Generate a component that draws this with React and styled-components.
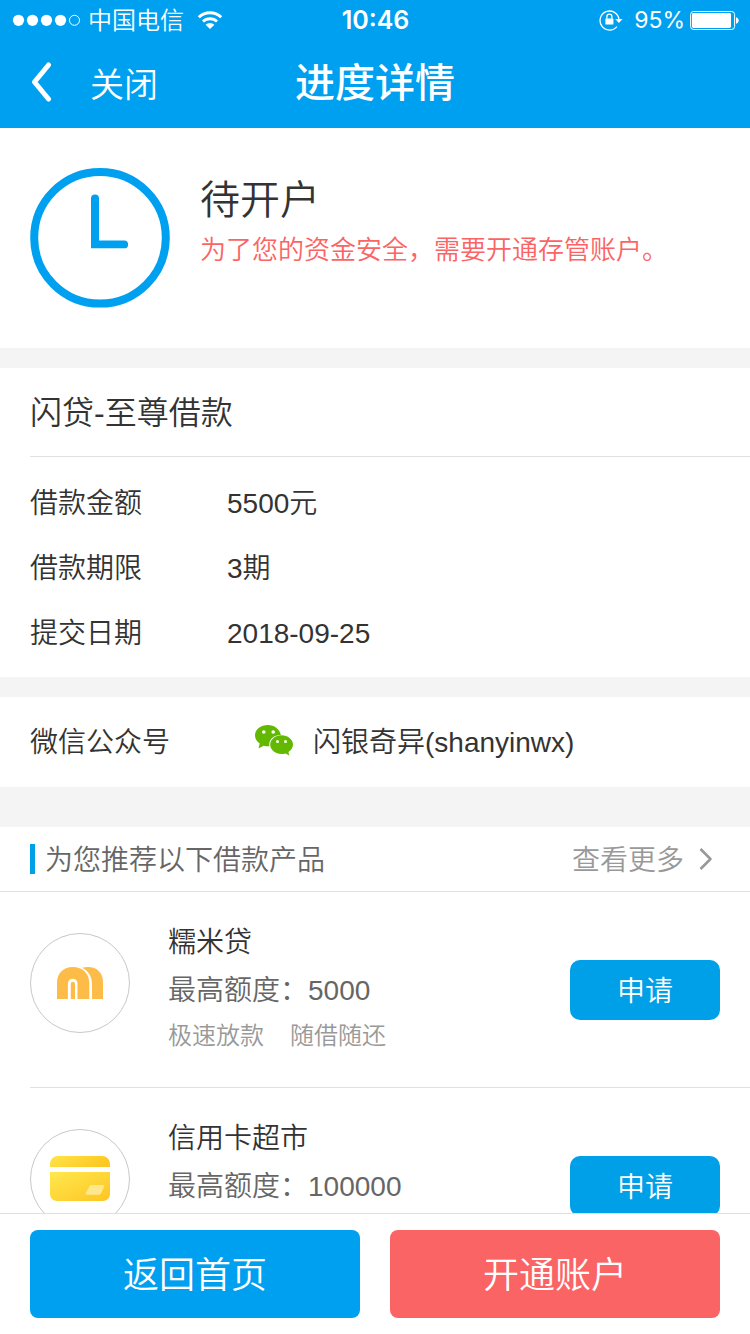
import React from "react";
import styled, { createGlobalStyle } from "styled-components";

const details = [
  { label: "借款金额", value: "5500元" },
  { label: "借款期限", value: "3期" },
  { label: "提交日期", value: "2018-09-25" },
];

const products = [
  {
    name: "糯米贷",
    limit: "5000",
    tags: ["极速放款", "随借随还"],
    logo: <NuomiLogo />,
  },
  {
    name: "信用卡超市",
    limit: "100000",
    tags: [],
    logo: <CardLogo />,
  },
];

export default function App() {
  return (
    <Page lang="zh-CN">
      <GlobalStyle />
      <Header>
        <StatusBar>
          <StatusSide>
            <SignalDots />
            <Carrier>中国电信</Carrier>
            <WifiIcon />
          </StatusSide>
          <Time>10:46</Time>
          <StatusSide $end>
            <RotationLock />
            <Percent>95%</Percent>
            <Battery />
          </StatusSide>
        </StatusBar>
        <NavBar>
          <NavSide>
            <BackButton type="button" aria-label="返回">
              <svg width="22" height="42" viewBox="0 0 22 42" fill="none">
                <path
                  d="M18.5 4 4.5 21l14 17"
                  stroke="#fff"
                  strokeWidth="5"
                  strokeLinecap="round"
                  strokeLinejoin="round"
                />
              </svg>
            </BackButton>
            <CloseButton type="button">关闭</CloseButton>
          </NavSide>
          <NavTitle>进度详情</NavTitle>
          <NavSide />
        </NavBar>
      </Header>

      <Content>
        <Progress>
          <ClockIcon />
          <ProgressText>
            <ProgressTitle>待开户</ProgressTitle>
            <ProgressTip>为了您的资金安全，需要开通存管账户。</ProgressTip>
          </ProgressText>
        </Progress>

        <Section>
          <LoanTitle>闪贷-至尊借款</LoanTitle>
          <DetailList>
            {details.map((item) => (
              <DetailRow key={item.label}>
                <Label>{item.label}</Label>
                <Value>{item.value}</Value>
              </DetailRow>
            ))}
          </DetailList>
        </Section>

        <WechatRow>
          <WechatLabel>微信公众号</WechatLabel>
          <WechatIcon />
          <span>闪银奇异(shanyinwx)</span>
        </WechatRow>

        <Recommend>
          <RecommendHead>
            <RecommendTitle>为您推荐以下借款产品</RecommendTitle>
            <MoreLink href="#more">
              <HeadText>查看更多</HeadText>
              <svg width="16" height="24" viewBox="0 0 16 24" fill="none">
                <path
                  d="M2.500 2l10 10-10 10"
                  stroke="#999"
                  strokeWidth="2.500"
                  strokeLinejoin="round"
                />
              </svg>
            </MoreLink>
          </RecommendHead>
          <ProductList>
            {products.map((item) => (
              <Product key={item.name}>
                <LogoCircle>{item.logo}</LogoCircle>
                <ProductInfo>
                  <ProductName>{item.name}</ProductName>
                  <ProductLimit>最高额度：{item.limit}</ProductLimit>
                  <Tags>
                    {item.tags.map((tag) => (
                      <span key={tag}>{tag}</span>
                    ))}
                  </Tags>
                </ProductInfo>
                <ApplyButton type="button">申请</ApplyButton>
              </Product>
            ))}
          </ProductList>
        </Recommend>
      </Content>

      <Footer>
        <ActionButton type="button">返回首页</ActionButton>
        <ActionButton type="button" $danger>
          开通账户
        </ActionButton>
      </Footer>
    </Page>
  );
}

function SignalDots() {
  return (
    <svg width="68" height="12" viewBox="0 0 68 12" fill="#fff">
      <circle cx="6.500" cy="6.300" r="5.600" />
      <circle cx="20.500" cy="6.300" r="5.600" />
      <circle cx="34.500" cy="6.300" r="5.600" />
      <circle cx="48.500" cy="6.300" r="5.600" />
      <circle cx="62.500" cy="6.300" r="5" fill="none" stroke="#fff" />
    </svg>
  );
}

function WifiIcon() {
  return (
    <svg width="26" height="20" viewBox="0 0 26 20" fill="none" stroke="#fff">
      <path d="M1.8 7.2a16 16 0 0 1 22.4 0" strokeWidth="3" />
      <path d="M6 11.6a10 10 0 0 1 14 0" strokeWidth="2.8" />
      <path d="M13 19l-4.4-4.2a6.4 6.4 0 0 1 8.8 0z" fill="#fff" stroke="none" />
    </svg>
  );
}

function RotationLock() {
  return (
    <svg width="24" height="22" viewBox="0 0 24 22" fill="none">
      <path
        d="M17.9 17.6A9.5 9.5 0 1 1 20 10.4"
        stroke="#fff"
        strokeWidth="1.3"
      />
      <path d="M16.2 10h7.4l-3.7 4z" fill="#fff" />
      <rect x="6.4" y="9.6" width="8" height="6" rx="0.6" fill="#fff" />
      <path
        d="M7.9 9.8V7.6a2.5 2.5 0 0 1 5 0v2.2"
        stroke="#fff"
        strokeWidth="1.3"
      />
    </svg>
  );
}

function Battery() {
  return (
    <svg width="49" height="20" viewBox="0 0 49 20" fill="none">
      <rect x="0.6" y="1.5" width="44" height="18" rx="3" stroke="#fff" />
      <rect x="2" y="3" width="39" height="15" rx="1.4" fill="#fff" />
      <path d="M46 7.2c3.6 1 3.6 5.6 0 6.6z" fill="#fff" />
    </svg>
  );
}

function ClockIcon() {
  return (
    <svg width="140" height="140" viewBox="0 0 140 140" fill="none">
      <circle cx="70" cy="69.800" r="65.800" stroke="#00a0f0" strokeWidth="8" />
      <path
        d="M61 30.500a4 4 0 0 1 8 0v42h25.200a3.900 3.900 0 0 1 0 7.800H61z"
        fill="#00a0f0"
      />
    </svg>
  );
}

function WechatIcon() {
  return (
    <WechatSvg width="40" height="32" viewBox="0 0 40 32" fill="#62b900">
      <path d="M14 1C6.500 1 1 5.500 1 11.300c0 3.400 1.800 6.200 4.700 8.200L4.500 24.400l5.100-2.700c1.400.4 2.800.6 4.600.6h1.200a9.200 9.200 0 0 1-.1-2.100c0-5.300 5-9.500 11.600-9.300C25.500 5 20.300 1 14 1z" />
      <path d="M27.500 11.200C21.200 11.200 16.200 15.400 16.200 20.600s5 9.400 11.300 9.400c1.400 0 2.700-.2 3.900-.6l4 2.200-1-3.700c2.800-1.700 4.600-4.200 4.600-7.300 0-5.200-5.200-9.400-11.500-9.400z" />
      <g fill="#fff">
        <circle cx="9.800" cy="8" r="1.800" />
        <circle cx="19.200" cy="8" r="1.800" />
        <circle cx="23.500" cy="17.600" r="1.500" />
        <circle cx="31.500" cy="17.600" r="1.500" />
      </g>
    </WechatSvg>
  );
}

function NuomiLogo() {
  return (
    <svg width="46" height="32" viewBox="0 0 46 32" fill="#fdbc48">
      <path d="M0 32V16C0 6 6.500 0 16 0c9.500 0 16.300 6.500 16.300 16v16H20.500V16.500a4.800 4.800 0 0 0-9.600 0V32z" />
      <path d="M13.800 32V17c0-3 4.200-3 4.200 0v15z" />
      <path d="M25 .8C27 .2 29 0 31 0c9 0 15 6 15 15v17H35V17C35 9.500 31.500 4 25 .8z" />
    </svg>
  );
}

function CardLogo() {
  return (
    <svg width="60" height="45" viewBox="0 0 60 45">
      <defs>
        <linearGradient id="card" x1="0" y1="0" x2="1" y2="1">
          <stop offset="0" stopColor="#ffe84f" />
          <stop offset="1" stopColor="#fdc522" />
        </linearGradient>
        <linearGradient id="stripe" x1="0" y1="0" x2="1" y2="0.300">
          <stop offset="0" stopColor="#ffe448" />
          <stop offset="1" stopColor="#fdc822" />
        </linearGradient>
      </defs>
      <path d="M0 11V8a8 8 0 0 1 8-8h44a8 8 0 0 1 8 8v3z" fill="url(#stripe)" />
      <path d="M0 16h60v22a7 7 0 0 1-7 7H7a7 7 0 0 1-7-7z" fill="url(#card)" />
      <path
        d="M41.500 29H53c1 0 1.600.7 1.200 1.600l-3 6.400c-.5 1.200-1.300 1.800-2.500 1.800H37c-1.300 0-1.800-.8-1.200-1.800l3.400-6.400c.5-1 1.200-1.600 2.300-1.600z"
        fill="#ffe78e"
      />
    </svg>
  );
}

const GlobalStyle = createGlobalStyle`
  * {
    box-sizing: border-box;
  }

  body {
    margin: 0;
    background: #f4f4f4;
    color: #333;
    font-family: "Liberation Sans", "Noto Sans CJK SC", sans-serif;
    font-size: 28px;
    font-weight: 350;
  }

  h1, h2, h3, p, ul, dl, dd {
    margin: 0;
    padding: 0;
    font-weight: inherit;
  }

  button {
    border: 0;
    padding: 0 0 4px;
    font: inherit;
    color: #fff;
    cursor: pointer;
  }

  svg {
    display: block;
    flex: none;
  }
`;

const Page = styled.div`
  display: flex;
  flex-direction: column;
  height: 100vh;
`;

const Header = styled.header`
  flex: none;
  background: #00a0f0;
  color: #fff;
`;

const StatusBar = styled.div`
  display: flex;
  align-items: center;
  height: 40px;
  padding: 0 11px 0 12px;
  font-family: Inter, "Noto Sans CJK SC", sans-serif;
  font-size: 24px;
`;

const StatusSide = styled.div`
  display: flex;
  flex: 1;
  align-items: center;
  justify-content: ${(props) => (props.$end ? "flex-end" : "flex-start")};
  gap: ${(props) => (props.$end ? "5px" : "8px")};
`;

const Carrier = styled.span`
  padding: 0 5px 3px 0;
`;

const Time = styled.span`
  font-size: 25px;
  font-weight: 600;
`;

const Percent = styled.span`
  margin-left: 6px;
  font-size: 23px;
  font-weight: 400;
`;

const NavBar = styled.div`
  display: flex;
  align-items: center;
  height: 88px;
  padding: 0 30px 4px;
`;

const NavSide = styled.div`
  display: flex;
  flex: 1;
  align-items: center;
  gap: 38px;
`;

const BackButton = styled.button`
  padding: 0;
  background: none;
`;

const CloseButton = styled.button`
  padding: 0;
  background: none;
  font-size: 34px;
`;

const NavTitle = styled.h1`
  padding-bottom: 4px;
  font-size: 40px;
  font-weight: 500;
`;

const Content = styled.main`
  flex: 1;
  min-height: 0;
  overflow-y: auto;
  scrollbar-width: none;
`;

const Section = styled.section`
  margin-bottom: 20px;
  background: #fff;
`;

const Progress = styled(Section)`
  display: flex;
  gap: 30px;
  padding: 40px 30px;
`;

const ProgressText = styled.div`
  padding-top: 2px;
`;

const ProgressTitle = styled.h2`
  font-size: 40px;
  line-height: 60px;
`;

const ProgressTip = styled.p`
  color: #fb6464;
  font-size: 26px;
  line-height: 40px;
`;

const LoanTitle = styled.h2`
  margin-left: 30px;
  padding-top: 2px;
  border-bottom: 1px solid #e0e0e0;
  font-size: 32px;
  line-height: 86px;
`;

const DetailList = styled.dl`
  padding: 14px 30px 11px;
`;

const DetailRow = styled.div`
  display: flex;
  line-height: 65px;
`;

const Label = styled.dt`
  width: 197px;
`;

const Value = styled.dd`
  flex: 1;
`;

const WechatRow = styled(Section)`
  display: flex;
  align-items: center;
  gap: 19px;
  margin-bottom: 40px;
  padding: 2px 30px 0;
  line-height: 88px;
`;

const WechatLabel = styled.span`
  width: 205px;
`;

const WechatSvg = styled.svg`
  margin-bottom: 6px;
`;

const Recommend = styled.section`
  background: #fff;
`;

const RecommendHead = styled.div`
  display: flex;
  align-items: center;
  justify-content: space-between;
  height: 65px;
  padding: 0 36px 0 30px;
  border-bottom: 1px solid #e0e0e0;
`;

const HeadText = styled.span`
  padding-top: 4px;
`;

const RecommendTitle = styled.h2`
  padding: 4px 0 0 15px;
  background: linear-gradient(#00a0e9, #00a0e9) left center / 5px 30px no-repeat;
  color: #666;
  font-size: 28px;
  line-height: 60px;
`;

const MoreLink = styled.a`
  display: flex;
  align-items: center;
  gap: 14px;
  color: #999;
  line-height: 60px;
  text-decoration: none;
`;

const ProductList = styled.ul`
  margin-left: 30px;
  list-style: none;
`;

const Product = styled.li`
  display: flex;
  align-items: center;
  height: 196px;
  padding-right: 30px;
  border-bottom: 1px solid #e0e0e0;
`;

const LogoCircle = styled.div`
  display: flex;
  align-items: center;
  justify-content: center;
  width: 100px;
  height: 100px;
  margin-bottom: 14px;
  border: 1px solid #c8c8c8;
  border-radius: 50%;
`;

const ProductInfo = styled.div`
  flex: 1;
  margin-left: 38px;
  padding-bottom: 4px;
`;

const ProductName = styled.h3`
  font-size: 28px;
  line-height: 48px;
`;

const ProductLimit = styled.p`
  color: #666;
  line-height: 48px;
`;

const Tags = styled.div`
  display: flex;
  gap: 26px;
  min-height: 42px;
  color: #999;
  font-size: 24px;
  line-height: 42px;
`;

const ApplyButton = styled.button`
  width: 150px;
  height: 60px;
  padding-bottom: 2px;
  border-radius: 10px;
  background: #00a0e9;
`;

const Footer = styled.footer`
  display: flex;
  flex: none;
  gap: 30px;
  padding: 16px 30px;
  border-top: 1px solid #e0e0e0;
  background: #fff;
`;

const ActionButton = styled.button`
  flex: 1;
  height: 88px;
  border-radius: 8px;
  background: ${(props) => (props.$danger ? "#fb6464" : "#00a0f0")};
  font-size: 36px;
`;
